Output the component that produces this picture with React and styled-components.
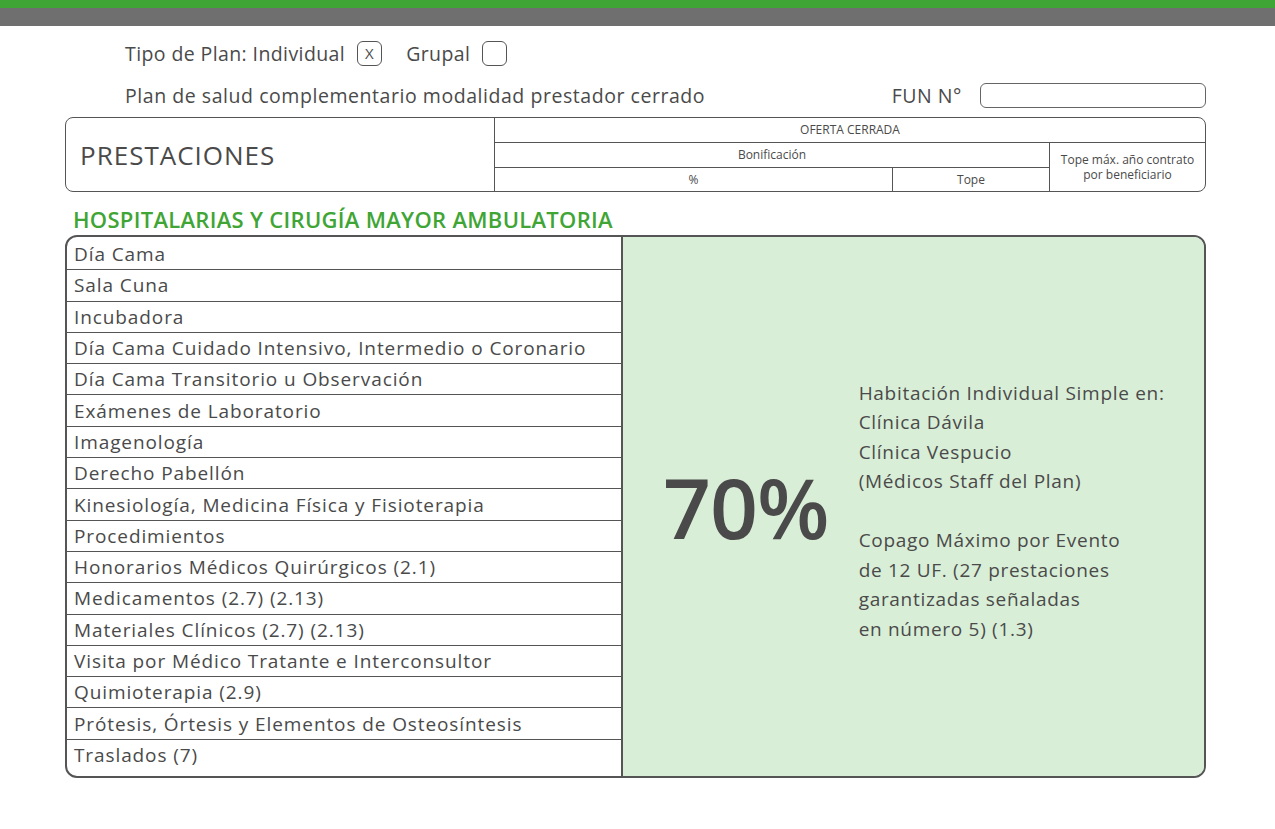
import styled, { createGlobalStyle } from 'styled-components';

const Global = createGlobalStyle`
  body { margin: 0; background: #fff; font-family: "Open Sans", "DejaVu Sans", sans-serif; color: #4a4a4a; }
`;

const rows = [
  'Día Cama', 'Sala Cuna', 'Incubadora', 'Día Cama Cuidado Intensivo, Intermedio o Coronario',
  'Día Cama Transitorio u Observación', 'Exámenes de Laboratorio', 'Imagenología', 'Derecho Pabellón',
  'Kinesiología, Medicina Física y Fisioterapia', 'Procedimientos', 'Honorarios Médicos Quirúrgicos (2.1)',
  'Medicamentos (2.7) (2.13)', 'Materiales Clínicos (2.7) (2.13)', 'Visita por Médico Tratante e Interconsultor',
  'Quimioterapia (2.9)', 'Prótesis, Órtesis y Elementos de Osteosíntesis', 'Traslados (7)',
];

const TopBar = styled.div`
  height: 8px; background: #3fa535; border-bottom: 18px solid #6f6f6f;
`;
const Page = styled.div`
  width: 1141px; margin: 0 0 0 65px;
`;
const PlanLine = styled.div`
  display: flex; align-items: center; gap: 12px; margin: 12px 0 0 60px;
  font-size: 19.5px; height: 30px; font-weight: 500; letter-spacing: 0.4px;
`;
const Box = styled.span`
  display: inline-flex; align-items: center; justify-content: center;
  width: 25px; height: 25px; border: 1.5px solid #555; border-radius: 6px; font-size: 15px;
  margin-right: ${p => p.$mr || 0}px; box-sizing: border-box;
`;
const SubLine = styled.div`
  display: flex; align-items: center; margin: 12px 0 0 60px; font-size: 19.5px; height: 30px;
  font-weight: 500; letter-spacing: 0.55px;
`;
const Fun = styled.span`
  margin-left: auto; margin-right: 18px;
`;
const FunBox = styled.span`
  width: 226px; height: 25px; border: 1.5px solid #666; border-radius: 6px; box-sizing: border-box;
`;
const Header = styled.div`
  margin-top: 7px; height: 75px; border: 1.5px solid #555; border-radius: 8px; box-sizing: border-box;
  display: grid; grid-template-columns: 428px 398px 157px 1fr; grid-template-rows: 1fr 1fr 1fr;
  overflow: hidden;
`;
const Cell = styled.div`
  display: flex; align-items: center; justify-content: center; font-size: 12px; text-align: center;
  border-left: ${p => p.$l ? '1.5px solid #555' : 'none'};
  border-top: ${p => p.$t ? '1.5px solid #555' : 'none'};
  line-height: 1.3; font-weight: 500;
`;
const Title = styled.div`
  grid-row: 1 / 4; display: flex; align-items: center; padding: 0 0 0 14px; font-size: 26px;
  font-weight: 500; letter-spacing: 1px;
`;
const Section = styled.div`
  color: #3fa535; font-size: 22px; margin: 12px 0 0 8px; height: 30px; font-weight: 600; letter-spacing: 0.3px;
`;
const Table = styled.div`
  margin-top: 1px; height: 543px; border: 2px solid #555; border-radius: 12px; box-sizing: border-box;
  display: grid; grid-template-columns: 556px 1fr; overflow: hidden;
`;
const List = styled.div`
  display: flex; flex-direction: column; padding-top: 2px; border-right: 2px solid #555;
`;
const Row = styled.div`
  height: 31.3px; display: flex; align-items: center; padding-left: 7px; font-size: 19px;
  font-weight: 500; letter-spacing: 0.9px; white-space: nowrap;
  border-bottom: ${p => p.$last ? 'none' : '1.5px solid #555'}; box-sizing: border-box;
`;
const Panel = styled.div`
  background: #d9eed7; display: flex; align-items: center; padding-left: 40px; gap: 30px;
`;
const Big = styled.div`
  font-size: 84px; font-weight: 600; letter-spacing: -1px;
`;
const Info = styled.div`
  font-size: 19px; line-height: 29.5px; margin-top: 10px; font-weight: 500; letter-spacing: 0.7px;
`;

export default function App() {
  return (
    <>
      <Global />
      <TopBar />
      <Page>
        <PlanLine>Tipo de Plan: Individual <Box $mr={12}>X</Box> Grupal <Box /></PlanLine>
        <SubLine>Plan de salud complementario modalidad prestador cerrado<Fun>FUN N°</Fun><FunBox /></SubLine>
        <Header>
          <Title>PRESTACIONES</Title>
          <Cell $l style={{ gridColumn: '2 / 5' }}>OFERTA CERRADA</Cell>
          <Cell $l $t style={{ gridColumn: '2 / 4' }}>Bonificación</Cell>
          <Cell $l $t style={{ gridRow: '2 / 4', gridColumn: 4 }}>Tope máx. año contrato<br />por beneficiario</Cell>
          <Cell $l $t style={{ gridRow: 3, gridColumn: 2 }}>%</Cell>
          <Cell $l $t style={{ gridRow: 3, gridColumn: 3 }}>Tope</Cell>
        </Header>
        <Section>HOSPITALARIAS Y CIRUGÍA MAYOR AMBULATORIA</Section>
        <Table>
          <List>
            {rows.map((r, i) => <Row key={r} $last={i === rows.length - 1}>{r}</Row>)}
          </List>
          <Panel>
            <Big>70%</Big>
            <Info>
              Habitación Individual Simple en:<br />Clínica Dávila<br />Clínica Vespucio<br />(Médicos Staff del Plan)<br /><br />
              Copago Máximo por Evento<br />de 12 UF. (27 prestaciones<br />garantizadas señaladas<br />en número 5) (1.3)
            </Info>
          </Panel>
        </Table>
      </Page>
    </>
  );
}
